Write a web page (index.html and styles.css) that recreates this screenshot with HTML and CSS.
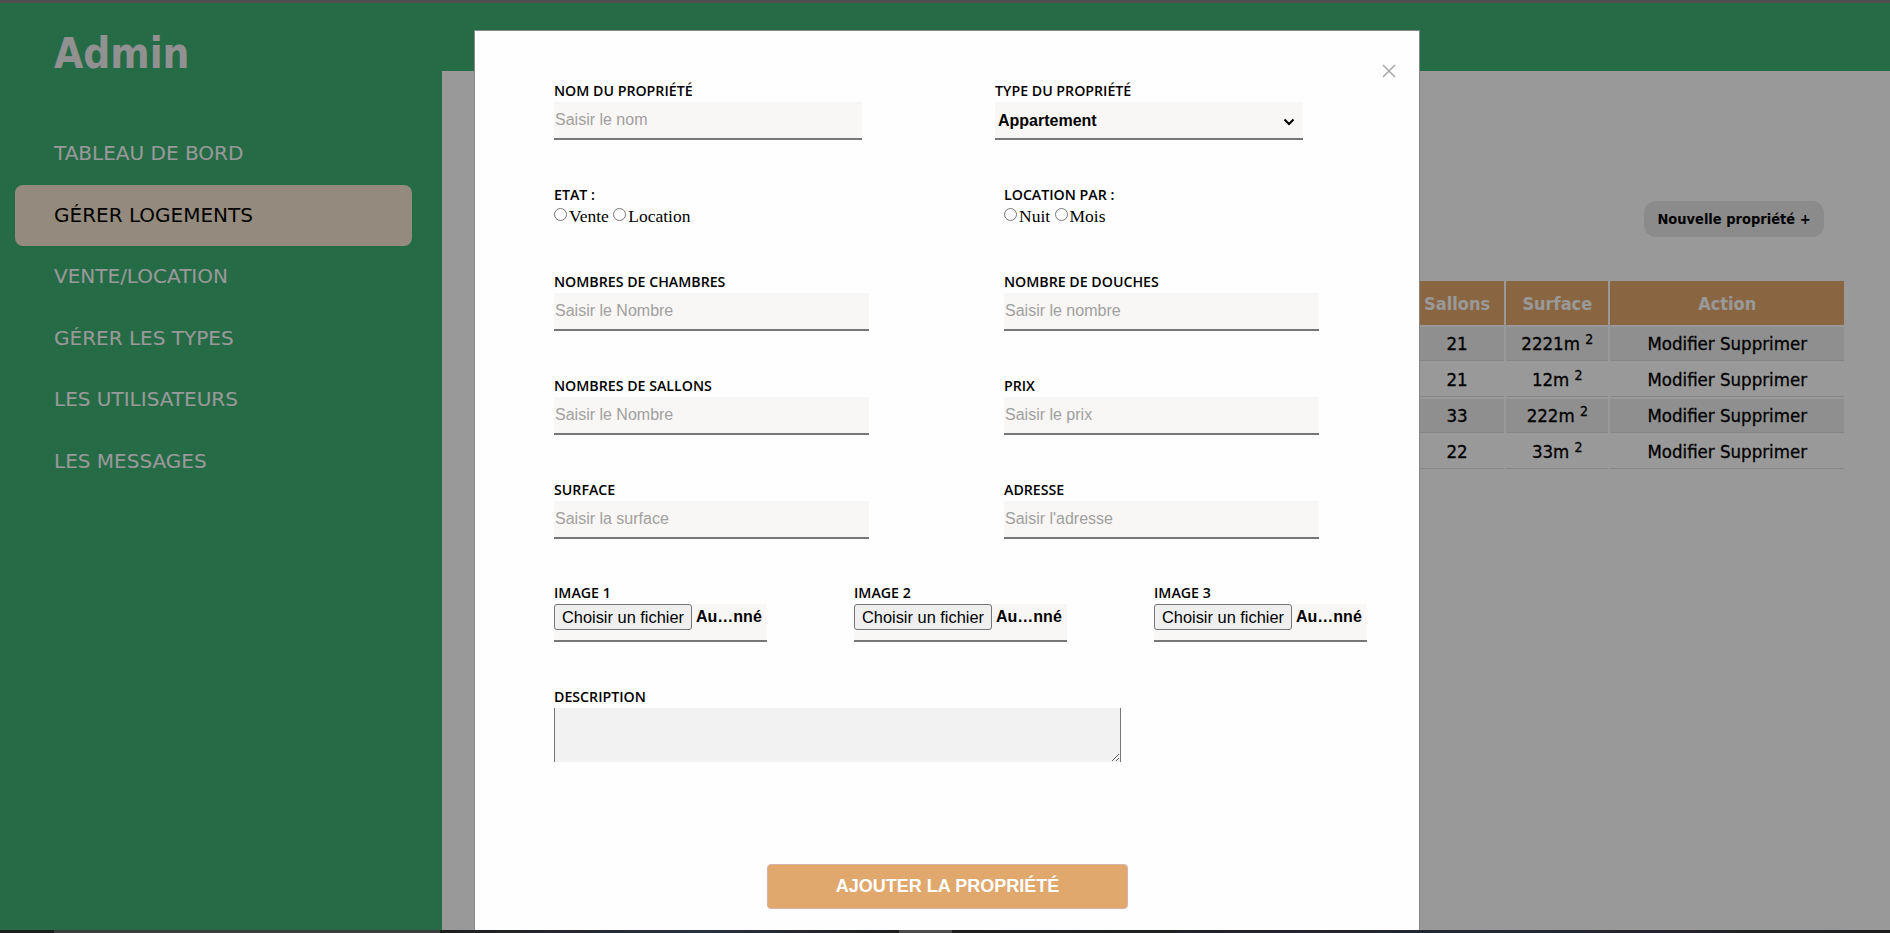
FILE: index.html
```html
<!DOCTYPE html>
<html lang="fr">
<head>
<meta charset="utf-8">
<title>Admin - Gérer logements</title>
<link rel="stylesheet" href="styles.css">
</head>
<body>
<div class="chrome-top"></div>
<div class="app">
  <aside class="sidebar">
    <h1 class="brand">Admin</h1>
    <nav class="nav">
      <a class="nav-item" href="#">TABLEAU DE BORD</a>
      <a class="nav-item active" href="#">GÉRER LOGEMENTS</a>
      <a class="nav-item" href="#">VENTE/LOCATION</a>
      <a class="nav-item" href="#">GÉRER LES TYPES</a>
      <a class="nav-item" href="#">LES UTILISATEURS</a>
      <a class="nav-item" href="#">LES MESSAGES</a>
    </nav>
  </aside>
  <main class="main">
    <header class="topbar"></header>
    <section class="content">
      <div class="toolbar">
        <button class="btn-new" type="button">Nouvelle propriété +</button>
      </div>
      <table class="props">
        <colgroup>
          <col class="c-hidden"><col class="c-hidden"><col class="c-hidden"><col class="c-hidden"><col class="c-hidden"><col class="c-hidden">
          <col class="c-sallons"><col class="c-surface"><col class="c-action">
        </colgroup>
        <thead>
          <tr><th>Nom</th><th>Type</th><th>Etat</th><th>Prix</th><th>Chambres</th><th>Douches</th><th>Sallons</th><th>Surface</th><th>Action</th></tr>
        </thead>
        <tbody>
          <tr><td></td><td></td><td></td><td></td><td></td><td></td><td>21</td><td>2221m <sup>2</sup></td><td>Modifier Supprimer</td></tr>
          <tr><td></td><td></td><td></td><td></td><td></td><td></td><td>21</td><td>12m <sup>2</sup></td><td>Modifier Supprimer</td></tr>
          <tr><td></td><td></td><td></td><td></td><td></td><td></td><td>33</td><td>222m <sup>2</sup></td><td>Modifier Supprimer</td></tr>
          <tr><td></td><td></td><td></td><td></td><td></td><td></td><td>22</td><td>33m <sup>2</sup></td><td>Modifier Supprimer</td></tr>
        </tbody>
      </table>
    </section>
  </main>

  <div class="overlay">
    <div class="modal">
      <span class="close" aria-label="Fermer">
        <svg width="14" height="14" viewBox="0 0 14 14"><path d="M1 1 L13 13 M13 1 L1 13" stroke="#a9a9a9" stroke-width="1.6" fill="none"/></svg>
      </span>
      <form class="form">
        <div class="row row-first">
          <div class="field">
            <label class="lbl">NOM DU PROPRIÉTÉ</label>
            <input class="inp" type="text" placeholder="Saisir le nom">
          </div>
          <div class="field">
            <label class="lbl">TYPE DU PROPRIÉTÉ</label>
            <div class="select-wrap">
              <select class="inp sel"><option>Appartement</option></select>
              <svg class="chev" width="12" height="8" viewBox="0 0 12 8"><path d="M1.5 1.5 L6 6 L10.5 1.5" stroke="#000" stroke-width="2" fill="none"/></svg>
            </div>
          </div>
        </div>

        <div class="row row-radio">
          <div class="field">
            <label class="lbl">ETAT :</label>
            <div class="radios"><label><input type="radio" name="etat">Vente</label> <label><input type="radio" name="etat">Location</label></div>
          </div>
          <div class="field">
            <label class="lbl">LOCATION PAR :</label>
            <div class="radios"><label><input type="radio" name="par">Nuit</label> <label><input type="radio" name="par">Mois</label></div>
          </div>
        </div>

        <div class="row row-std r3">
          <div class="field">
            <label class="lbl">NOMBRES DE CHAMBRES</label>
            <input class="inp" type="text" placeholder="Saisir le Nombre">
          </div>
          <div class="field">
            <label class="lbl">NOMBRE DE DOUCHES</label>
            <input class="inp" type="text" placeholder="Saisir le nombre">
          </div>
        </div>

        <div class="row row-std">
          <div class="field">
            <label class="lbl">NOMBRES DE SALLONS</label>
            <input class="inp" type="text" placeholder="Saisir le Nombre">
          </div>
          <div class="field">
            <label class="lbl">PRIX</label>
            <input class="inp" type="text" placeholder="Saisir le prix">
          </div>
        </div>

        <div class="row row-std">
          <div class="field">
            <label class="lbl">SURFACE</label>
            <input class="inp" type="text" placeholder="Saisir la surface">
          </div>
          <div class="field">
            <label class="lbl">ADRESSE</label>
            <input class="inp" type="text" placeholder="Saisir l'adresse">
          </div>
        </div>

        <div class="row row-images">
          <div class="field">
            <label class="lbl">IMAGE 1</label>
            <div class="file"><button class="file-btn" type="button">Choisir un fichier</button><span class="file-name">Au…nné</span></div>
          </div>
          <div class="field">
            <label class="lbl">IMAGE 2</label>
            <div class="file"><button class="file-btn" type="button">Choisir un fichier</button><span class="file-name">Au…nné</span></div>
          </div>
          <div class="field">
            <label class="lbl">IMAGE 3</label>
            <div class="file"><button class="file-btn" type="button">Choisir un fichier</button><span class="file-name">Au…nné</span></div>
          </div>
        </div>

        <div class="row row-desc">
          <div class="field">
            <label class="lbl">DESCRIPTION</label>
            <textarea class="desc"></textarea>
          </div>
        </div>

        <button class="submit" type="button">AJOUTER LA PROPRIÉTÉ</button>
      </form>
    </div>
  </div>
</div>
<div class="taskbar"></div>
</body>
</html>
```

FILE: styles.css
```css
* { box-sizing: border-box; }

html, body {
  margin: 0;
  padding: 0;
  width: 1890px;
  height: 933px;
  overflow: hidden;
  background: #1c1c1c;
}

.chrome-top {
  height: 3px;
  background: #4f4f4f;
}

.app {
  position: relative;
  height: 927px;
  display: flex;
  overflow: hidden;
  background: #ffffff;
}

/* ---------- Sidebar ---------- */
.sidebar {
  width: 442px;
  flex: 0 0 442px;
  background: #3fb275;
  display: flex;
  flex-direction: column;
}

.brand {
  margin: 30px 0 0 0;
  padding-left: 54px;
  font-family: "DejaVu Sans Condensed", "DejaVu Sans", Verdana, sans-serif;
  font-weight: bold;
  font-size: 42px;
  line-height: 42px;
  color: #f2f2f2;
}

.nav {
  margin-top: 48px;
  display: flex;
  flex-direction: column;
}

.nav-item {
  margin: 0 30px 0 15px;
  padding: 18px 0 18px 39px;
  font-family: "DejaVu Sans", Verdana, sans-serif;
  font-size: 20px;
  line-height: 25.6px;
  color: #ffffff;
  text-decoration: none;
  border-radius: 8px;
}

.nav-item.active {
  background: #f7e8d2;
  color: #000000;
}

/* ---------- Main ---------- */
.main {
  flex: 1;
  display: flex;
  flex-direction: column;
}

.topbar {
  height: 68px;
  background: #3fb275;
}

.content {
  padding: 130px 44px 0 0;
}

.toolbar {
  display: flex;
  justify-content: flex-end;
  padding-right: 22px;
}

.btn-new {
  width: 180px;
  height: 36px;
  border: none;
  border-radius: 12px;
  background: #e8e8e8;
  color: #000;
  font-family: "DejaVu Sans Condensed", "DejaVu Sans", sans-serif;
  font-weight: bold;
  font-size: 14.5px;
  padding: 0;
}

.props {
  margin: 42px 0 0 auto;
  width: 1346px;
  table-layout: fixed;
  border-collapse: separate;
  border-spacing: 2px;
  font-family: "DejaVu Sans Condensed", "DejaVu Sans", sans-serif;
  background: #ffffff;
}

.c-hidden { width: 149px; }
.c-sallons { width: 94px; }
.c-surface { width: 102px; }
.c-action { width: 233px; }

.props th {
  height: 44px;
  padding: 0;
  background: #e6a86e;
  color: #ffffff;
  font-weight: bold;
  font-size: 18px;
  text-align: center;
}

.props td {
  height: 34px;
  padding: 0;
  font-size: 18.5px;
  color: #000;
  text-align: center;
  border-bottom: 1px solid #e2e2e2;
  -webkit-text-stroke: 0.3px #000;
}

.props tbody tr:nth-child(odd) td { background: #eeeeee; }

.props sup {
  font-size: 14px;
  vertical-align: 6px;
  line-height: 0;
}

/* ---------- Modal ---------- */
.overlay {
  position: absolute;
  inset: 0;
  background: rgba(0, 0, 0, 0.4);
}

.modal {
  position: relative;
  margin: 27px 0 0 474px;
  width: 946px;
  height: 1000px;
  background: #fefefe;
  border: 1px solid #888;
  padding: 52px 0 0 79px;
}

.close {
  position: absolute;
  top: 33px;
  right: 23px;
  width: 14px;
  height: 14px;
  display: block;
}
.close svg { display: block; }

.form {
  display: flex;
  flex-direction: column;
  align-items: flex-start;
}

.row { display: flex; }

.field {
  display: flex;
  flex-direction: column;
}

.lbl {
  display: block;
  font-family: "Open Sans", "Noto Sans", sans-serif;
  font-weight: 600;
  font-size: 14.2px;
  line-height: 16px;
  color: #000;
  height: 16px;
  white-space: nowrap;
}

.inp {
  margin-top: 3px;
  height: 38px;
  border: none;
  border-bottom: 2px solid #777;
  background: #f9f7f5;
  padding: 0 1px;
  font-family: "Liberation Sans", Arial, sans-serif;
  font-size: 16px;
  color: #000;
  outline: none;
  border-radius: 0;
}
.inp::placeholder { color: #a0a0a0; }

.row-first { gap: 133px; }
.row-first .field { width: 308px; }
.row-first .inp { width: 308px; }

.select-wrap {
  position: relative;
  width: 308px;
}
.sel {
  width: 308px;
  appearance: none;
  -webkit-appearance: none;
  font-weight: bold;
  padding-left: 3px;
}
.chev {
  position: absolute;
  right: 8px;
  top: 19px;
}

.row-radio {
  margin-top: 47px;
  gap: 135px;
}
.row-radio .field { width: 315px; }

.radios {
  padding-top: 4px;
  line-height: 18px;
  font-family: "Liberation Serif", "Times New Roman", serif;
  font-size: 17.5px;
  color: #000;
  white-space: nowrap;
}
.radios input {
  margin: 0 2px 0 0;
  width: 13px;
  height: 13px;
  vertical-align: 1px;
}

.row-std {
  margin-top: 47px;
  gap: 135px;
}
.row-std.r3 { margin-top: 49px; }
.row-std .field { width: 315px; }
.row-std .inp { width: 315px; }

.row-images {
  margin-top: 46px;
  gap: 87px;
}
.row-images .field { width: 213px; }

.file {
  margin-top: 3px;
  height: 38px;
  background: #f9f7f5;
  border-bottom: 2px solid #777;
  display: flex;
  align-items: flex-start;
}
.file-btn {
  height: 26px;
  width: 138px;
  padding: 0;
  background: #efefef;
  border: 1px solid #767676;
  border-radius: 3px;
  font-family: "Liberation Sans", Arial, sans-serif;
  font-size: 16.4px;
  color: #000;
  white-space: nowrap;
}
.file-name {
  margin-left: 4px;
  line-height: 26px;
  font-family: "Liberation Sans", Arial, sans-serif;
  font-weight: bold;
  font-size: 16px;
  color: #000;
  white-space: nowrap;
}

.row-desc { margin-top: 47px; }

.desc {
  margin-top: 3px;
  width: 567px;
  height: 54px;
  background: #f2f2f2;
  border: none;
  border-left: 1px solid #767676;
  border-right: 1px solid #767676;
  border-radius: 0;
  outline: none;
  display: block;
}

.submit {
  margin: 102px 0 0 213px;
  width: 361px;
  height: 45px;
  background: #e0a86d;
  border: 1px solid #d9b2aa;
  border-radius: 4px;
  color: #ffffff;
  font-family: "Liberation Sans", Arial, sans-serif;
  font-weight: bold;
  font-size: 18px;
  padding: 0;
}

/* ---------- Bottom strip ---------- */
.taskbar {
  height: 3px;
  background: linear-gradient(to right, #1e1e1e 0, #1e1e1e 54px, #3c3c3c 54px, #3c3c3c 440px, #1e1e1e 440px, #2a3140 700px, #1e1e1e 899px, #4a4a4a 899px, #4a4a4a 952px, #1e1e1e 952px, #232834 1500px, #1e1e1e 1890px);
}
```
